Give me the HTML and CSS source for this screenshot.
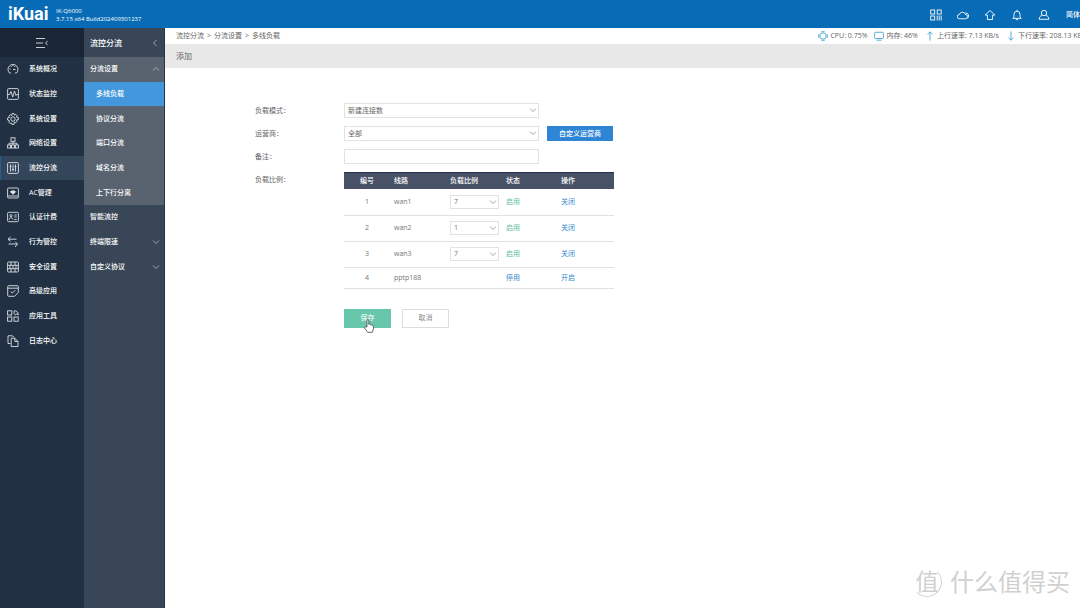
FILE: index.html
```html
<!DOCTYPE html>
<html lang="zh-CN">
<head>
<meta charset="utf-8">
<meta name="viewport" content="width=device-width, initial-scale=1">
<title>iKuai - 多线负载</title>
<link rel="stylesheet" href="styles.css">
</head>
<body>
<svg class="sprite" aria-hidden="true">
  <symbol id="down" viewBox="0 0 8 8"><path d="M1 2.5 4 5.5 7 2.5"/></symbol>
  <symbol id="up" viewBox="0 0 8 8"><path d="M1 5.5 4 2.5 7 5.5"/></symbol>
  <symbol id="left" viewBox="0 0 8 8"><path d="M5.5 1 2.5 4 5.5 7"/></symbol>
</svg>
<div class="app">
  <header class="topbar">
    <a class="logo" href="#">iKuai</a>
    <div class="device"><span>IK-Q6000</span><span>3.7.15 x64 Build202409301237</span></div>
    <nav class="tools" aria-label="工具">
      <a href="#" aria-label="应用"><svg class="icon" viewBox="0 0 12 12"><rect x=".7" y="1" width="4" height="4"/><rect x="7.2" y="1" width="4" height="4"/><rect x=".7" y="7" width="4" height="4"/><path d="M7.2 6.5v5M9.2 6.5v5M11.2 6.5v5"/></svg></a>
      <a href="#" aria-label="云服务"><svg class="icon" viewBox="0 0 12 12"><path d="M2.5 9.8a2.2 2.2 0 0 1 0-4.4 3 3 0 0 1 5.8 0 2.2 2.2 0 0 1 0 4.4zM8.5 3.9a3 3 0 0 1 1.8 5.5"/></svg></a>
      <a href="#" aria-label="升级"><svg class="icon" viewBox="0 0 12 12"><path d="M6 1.5 10.8 6H8.6v4.5H3.4V6H1.2z"/></svg></a>
      <a href="#" aria-label="通知"><svg class="icon" viewBox="0 0 12 12"><path d="M1.8 9.3h8.4L9 7.8V5.2a3 3 0 0 0-6 0v2.6zM6 .8v1.3M4.8 9.5c0 1.8 2.4 1.8 2.4 0"/></svg></a>
      <a href="#" aria-label="账户"><svg class="icon" viewBox="0 0 12 12"><circle cx="6" cy="4" r="2.7"/><path d="M4 6.5C2 7 1.2 8.300 1.200 10.300h9.600C10.800 8.300 10 7 8 6.500"/></svg></a>
      <a class="language" href="#">简体中文</a>
    </nav>
  </header>
  <div class="body">
    <nav class="primary" aria-label="主菜单">
      <button class="collapse" type="button" aria-label="收起菜单"><svg class="icon" viewBox="0 0 12 12"><path d="M0 1.500h9M0 6h7M0 10.500h9M11.700 3.800 9.500 6l2.200 2.200"/></svg></button>
      <div class="primary-list">
        <a href="#"><svg class="icon" viewBox="0 0 12 12"><path d="M2.500 10a5 5 0 1 1 7 0H8M2.500 10H4M6 6.500h2.500M2.500 6h1M4 3l.5.8M6 2v1M8 3l-.5.8"/></svg>系统概况</a>
        <a href="#"><svg class="icon" viewBox="0 0 12 12"><rect x=".6" y=".6" width="10.800" height="10.800" rx="1"/><path d="M1 6.500h1.500l1.500-3 1.700 5.500L7.500 3l1.500 4.500.6-1H11"/></svg>状态监控</a>
        <a href="#"><svg class="icon" viewBox="0 0 12 12"><circle cx="6" cy="6" r="2.200"/><path d="M5 .6h2l.4 1.500 1.300-.8 1.500 1.500-.8 1.300 1.500.4.500 0v2l-2 .5.8 1.300-1.500 1.500-1.300-.8L7 11.400H5L4.600 9.900l-1.300.8-1.500-1.500.8-1.300L.6 7V5l2-.5-.8-1.300 1.500-1.500 1.300.8z"/></svg>系统设置</a>
        <a href="#"><svg class="icon" viewBox="0 0 12 12"><rect x="4" y=".8" width="4" height="3.500"/><rect x=".6" y="8" width="3" height="3"/><rect x="4.500" y="8" width="3" height="3"/><rect x="8.400" y="8" width="3" height="3"/><path d="M6 4.300V8M2 8V6.200h8V8"/></svg>网络设置</a>
        <a class="current" href="#"><svg class="icon" viewBox="0 0 12 12"><rect x=".6" y=".6" width="10.800" height="10.800" rx="1"/><path d="M3.500 2.500v7M6 2.500v7M8.500 2.500v7M2.600 4.500h1.800M5.100 7.500h1.800M7.600 4.500h1.800"/></svg>流控分流</a>
        <a href="#"><svg class="icon" viewBox="0 0 12 12"><rect x=".6" y="1" width="10.800" height="10" rx="1"/><path d="M1 9h10"/><path class="solid" d="M2.800 4.700q3.200-3 6.400 0L6 7.800z"/></svg>AC管理</a>
        <a href="#"><svg class="icon" viewBox="0 0 12 12"><rect x=".6" y="1.300" width="10.800" height="9.400" rx="1"/><circle cx="4" cy="4.700" r="1.100"/><path d="M2.200 8.500c0-2.400 3.600-2.400 3.600 0M7.300 4h2.400M7.300 6h2.400M7.300 8.500h2.400"/></svg>认证计费</a>
        <a href="#"><svg class="icon" viewBox="0 0 12 12"><path d="M3.500.8 1 3.200l2.500 2.300M1 3.200h8.500M1.500 8h9L8.300 5.800M10.500 8 8 11"/></svg>行为管控</a>
        <a href="#"><svg class="icon" viewBox="0 0 12 12"><rect x=".6" y="1" width="10.800" height="10" rx="1"/><path d="M.6 4.300h10.800M.6 7.700h10.800M4 1v3.300M8 1v3.300M6 4.300v3.400M3 4.300v3.400M9 4.300v3.400M4 7.700V11M8 7.700V11"/></svg>安全设置</a>
        <a href="#"><svg class="icon" viewBox="0 0 12 12"><path d="M7.500 11.300H1.700a1 1 0 0 1-1-1V1.700a1 1 0 0 1 1-1h8.600a1 1 0 0 1 1 1v5.800zM.7 3.200h10.600M3.700 6.500l1.600 1.600 3-3"/></svg>高级应用</a>
        <a href="#"><svg class="icon" viewBox="0 0 12 12"><rect x=".6" y=".8" width="4.200" height="4.200"/><rect x=".6" y="7" width="4.200" height="4.200"/><rect x="7" y="7" width="4.200" height="4.200"/><path d="M7.200.8c2.500-.4 4.500 1.800 4 4.200L9.500 3.700 8.500 5C7 4 6.800 2.500 7.200.8z"/></svg>应用工具</a>
        <a href="#"><svg class="icon" viewBox="0 0 12 12"><path d="M3.500 8.500H1V.8h4.500L7 2.500M4.200 3.200h3.600L11 6.500v5H4.200zM7.800 3.200v3.300H11"/></svg>日志中心</a>
      </div>
    </nav>
    <nav class="secondary" aria-label="流控分流">
      <button class="secondary-title" type="button">流控分流<svg class="chevron"><use href="#left"/></svg></button>
      <div class="secondary-list">
        <button class="open" type="button" aria-expanded="true">分流设置<svg class="chevron"><use href="#up"/></svg></button>
        <a class="child current" href="#">多线负载</a>
        <a class="child" href="#">协议分流</a>
        <a class="child" href="#">端口分流</a>
        <a class="child" href="#">域名分流</a>
        <a class="child" href="#">上下行分离</a>
        <a href="#">智能流控</a>
        <button type="button" aria-expanded="false">终端限速<svg class="chevron"><use href="#down"/></svg></button>
        <button type="button" aria-expanded="false">自定义协议<svg class="chevron"><use href="#down"/></svg></button>
      </div>
    </nav>
    <main class="content">
      <div class="infobar">
        <div class="crumbs"><a href="#">流控分流</a><span>&gt;</span><a href="#">分流设置</a><span>&gt;</span><a href="#">多线负载</a></div>
        <div class="stats">
          <span class="stat"><svg class="icon" viewBox="0 0 12 12"><rect x="2.500" y="2.500" width="7" height="7" rx="2"/><path d="M4 .8h4M4 11.200h4M.8 4v4M11.200 4v4"/></svg>CPU: 0.75%</span>
          <span class="stat"><svg class="icon" viewBox="0 0 12 12"><rect x=".8" y="1.500" width="10.400" height="7.500" rx="1"/><path d="M3 11h6"/></svg>内存: 46%</span>
          <span class="stat"><svg class="icon" viewBox="0 0 12 12"><path d="M6 11.500V1M3 4l3-3 3 3"/></svg>上行速率: 7.13 KB/s</span>
          <span class="stat"><svg class="icon" viewBox="0 0 12 12"><path d="M6 .5V11M3 8l3 3 3-3"/></svg>下行速率: 208.13 KB/s</span>
        </div>
      </div>
      <h1 class="page-title">添加</h1>
      <form class="form">
        <label for="mode">负载模式：</label>
        <div class="controls"><span class="select"><select id="mode"><option>新建连接数</option></select><svg class="chevron"><use href="#down"/></svg></span></div>
        <label for="isp">运营商：</label>
        <div class="controls"><span class="select"><select id="isp"><option>全部</option></select><svg class="chevron"><use href="#down"/></svg></span><button class="custom" type="button">自定义运营商</button></div>
        <label for="note">备注：</label>
        <div class="controls"><input class="note" id="note" type="text"></div>
        <span class="label" id="ratio">负载比例：</span>
        <div>
          <table class="lines" aria-labelledby="ratio">
            <thead><tr><th class="number">编号</th><th class="line">线路</th><th class="ratio">负载比例</th><th class="state">状态</th><th>操作</th></tr></thead>
            <tbody>
              <tr><td class="number">1</td><td>wan1</td><td><span class="select"><select aria-label="wan1 负载比例"><option>7</option></select><svg class="chevron"><use href="#down"/></svg></span></td><td class="on">启用</td><td><a href="#">关闭</a></td></tr>
              <tr><td class="number">2</td><td>wan2</td><td><span class="select"><select aria-label="wan2 负载比例"><option>1</option></select><svg class="chevron"><use href="#down"/></svg></span></td><td class="on">启用</td><td><a href="#">关闭</a></td></tr>
              <tr><td class="number">3</td><td>wan3</td><td><span class="select"><select aria-label="wan3 负载比例"><option>7</option></select><svg class="chevron"><use href="#down"/></svg></span></td><td class="on">启用</td><td><a href="#">关闭</a></td></tr>
              <tr class="short"><td class="number">4</td><td>pptp188</td><td></td><td class="off">停用</td><td><a href="#">开启</a></td></tr>
            </tbody>
          </table>
          <div class="actions">
            <button class="save" type="button">保存<svg class="pointer" viewBox="0 0 10 14"><path d="M3 8V1.700C3 .3 4.800.3 4.800 1.700V5.500C5.300 4.800 6.300 5 6.500 5.800 7.200 5.300 8 5.700 8.100 6.400 8.800 6.200 9.400 6.700 9.400 7.500V10L8.300 13.300H3.700L.8 9.300C.1 8.300 1.200 7.300 2 8z"/></svg></button>
            <button class="cancel" type="button">取消</button>
          </div>
        </div>
      </form>
    </main>
  </div>
  <div class="watermark"><span class="seal">值</span>什么值得买</div>
</div>
</body>
</html>
```
FILE: styles.css
```css
* { box-sizing: border-box; }
body {
  margin: 0;
  background: #fff;
  color: #666;
  font: 7px/12px "Open Sans", "Noto Sans CJK SC", sans-serif;
}
a { color: inherit; text-decoration: none; }
button, input, select { margin: 0; padding: 0; border: 0; background: none; color: inherit; font: inherit; }
button { cursor: pointer; }
svg { fill: none; stroke: currentColor; flex: none; }
.sprite { display: none; }
.icon { width: 12px; height: 12px; }
.icon .solid { fill: currentColor; stroke: none; }
.chevron { width: 8px; height: 8px; stroke-width: 0.8; }

.app { position: relative; display: flex; flex-direction: column; min-height: 100vh; overflow: hidden; }

.topbar { display: flex; align-items: center; height: 28px; padding-left: 8px; background: #076bb5; color: #fff; }
.logo { width: 48px; font: 700 18px/28px Roboto, sans-serif; }
.device { display: flex; flex-direction: column; padding-top: 1px; font-size: 6px; line-height: 8px; }
.tools { display: flex; align-items: center; gap: 15px; margin-left: auto; margin-right: -14px; padding-top: 2px; }
.tools a { display: flex; }
.tools svg { stroke-width: 0.9; }
.tools .language { font-weight: 500; margin-left: 1px; }

.body { display: flex; flex: 1; }
.primary { flex: none; width: 84px; background: #213143; color: #fff; font-weight: 500; }
.collapse { display: flex; align-items: center; justify-content: center; width: 100%; height: 29px; background: #1a2636; }
.collapse .icon { color: #c8ced6; }
.primary-list { display: grid; grid-auto-rows: 1fr; height: 296px; }
.primary-list a { display: flex; align-items: center; gap: 10px; padding-left: 7px; }
.primary-list .icon { color: #dce1e6; stroke-width: 0.9; }
.primary-list .current { background: #34465a; box-shadow: inset 1px 0 #1f6096; }

.secondary { flex: none; width: 81px; border-right: 1px solid #26344c; background: #384657; color: #fff; font-weight: 500; }
.secondary-title { display: flex; align-items: center; justify-content: space-between; width: 100%; height: 29px; padding: 0 5px 0 6px; font-size: 8px; }
.secondary-list { display: grid; grid-auto-rows: 1fr; height: 222px; }
.secondary-list > * { display: flex; align-items: center; justify-content: space-between; padding: 0 4px 0 6px; }
.secondary .chevron { color: #b5bdc6; }
.secondary-list .open { background: #58636f; }
.secondary-list .child { padding-left: 12px; background: #58636f; }
.secondary-list .current { background: #4398dd; }

.content { flex: 1; min-width: 0; }
.infobar { display: flex; align-items: center; height: 16px; padding-left: 11px; white-space: nowrap; }
.crumbs { display: flex; gap: 3px; }
.stats { display: flex; gap: 7px; margin-left: auto; margin-right: -8px; }
.stat { display: flex; align-items: center; gap: 2px; }
.stat .icon { width: 10px; height: 10px; color: #309bd0; }
.page-title { margin: 0; padding: 0 11px; background: #e8e8e8; font-size: 8px; font-weight: 400; line-height: 24px; }

.form { display: grid; grid-template-columns: 81px minmax(0, 1fr); gap: 8px; padding: 35px 16px 16px 90px; }
.form label, .form .label { font-family: "Noto Sans CJK TC", sans-serif; line-height: 15px; }
.controls { display: flex; gap: 8px; }
.select { position: relative; display: block; width: 195px; }
.select select, .note { display: block; width: 100%; height: 15px; padding: 0 3px; border: 1px solid #e2e2e2; border-radius: 0; background: #fff; appearance: none; }
.select .chevron { position: absolute; right: 2px; top: 3px; color: #888; pointer-events: none; }
.controls .note { width: 195px; }
.custom { width: 66px; height: 15px; background: #2e84d5; color: #fff; font-weight: 500; }

.lines { width: 270px; border-collapse: collapse; table-layout: fixed; color: #777; }
.lines th { height: 17px; padding: 0 4px; background: #495166; box-shadow: inset 0 1px #263050; color: #fff; font-weight: 500; text-align: left; }
.lines td { height: 26px; padding: 0 4px; border-bottom: 1px solid #e1e1e1; }
.lines .short td { height: 21px; }
.lines .number { width: 46px; text-align: center; }
.lines .line, .lines .ratio { width: 56px; }
.lines .state { width: 55px; }
.lines .select { width: 49px; }
.lines select { height: 14px; }
.lines a, .lines .off { color: #3388cc; }
.lines .on { color: #5ebd9e; }

.actions { display: flex; gap: 11px; margin-top: 20px; }
.actions button { width: 47px; height: 19px; border: 1px solid #ddd; color: #888; }
.actions .save { position: relative; border-color: #68c7aa; background: #68c7aa; color: #fff; }
.pointer { position: absolute; left: 19px; top: 9px; width: 10px; height: 14px; fill: #fff; stroke: #444; stroke-width: 0.8; }

.watermark { position: absolute; right: 10px; bottom: 9px; display: flex; align-items: center; gap: 8px; color: #d0d0d0; font-size: 24px; line-height: 34px; pointer-events: none; }
.seal { width: 30px; height: 30px; border: 1px solid #d0d0d0; border-top-color: transparent; border-left-color: transparent; border-radius: 50%; font-size: 23px; line-height: 26px; text-align: center; }
```
